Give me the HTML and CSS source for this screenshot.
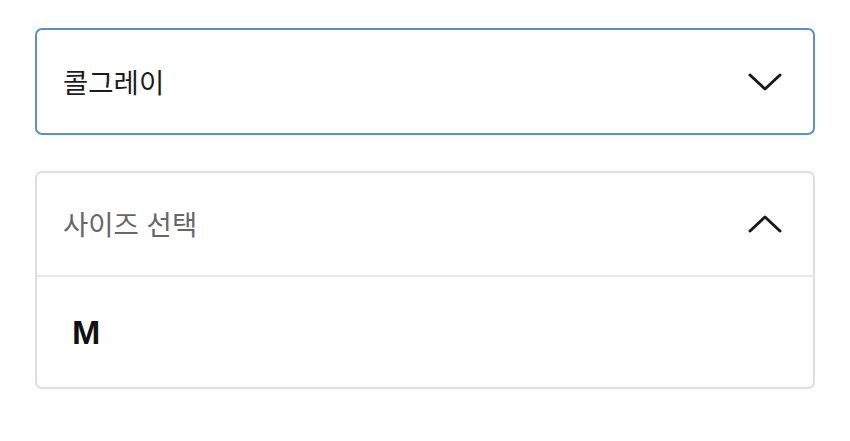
FILE: index.html
```html
<!DOCTYPE html>
<html lang="ko">
<head>
<meta charset="utf-8">
<title>옵션 선택</title>
<link rel="stylesheet" href="styles.css">
</head>
<body>
<div class="options">
  <div class="select select--active">
    <span class="select__value">콜그레이</span>
    <svg class="chevron" width="34" height="18" viewBox="0 0 34 18"><path d="M2 2 L17 16 L32 2" fill="none" stroke="#1a1a1a" stroke-width="3" stroke-linecap="round" stroke-linejoin="round"/></svg>
  </div>
  <div class="select select--open">
    <div class="select__head">
      <span class="select__placeholder">사이즈 선택</span>
      <svg class="chevron" width="34" height="18" viewBox="0 0 34 18"><path d="M2 16 L17 2 L32 16" fill="none" stroke="#1a1a1a" stroke-width="3" stroke-linecap="round" stroke-linejoin="round"/></svg>
    </div>
    <ul class="select__list">
      <li class="select__item">M</li>
    </ul>
  </div>
</div>
</body>
</html>
```
FILE: styles.css
```css
html, body {
  margin: 0;
  padding: 0;
  background: #fff;
}

body {
  font-family: "Noto Sans CJK KR", "Noto Sans", sans-serif;
  color: #1a1a1a;
}

.options {
  display: flex;
  flex-direction: column;
  gap: 36px;
  padding: 28px 35px 0 35px;
  width: 780px;
}

.select {
  border: 2px solid #dedede;
  border-radius: 7px;
  box-sizing: border-box;
}

.select--active {
  border-color: #5b8ecc;
  height: 107px;
  display: flex;
  align-items: center;
  justify-content: space-between;
  padding: 0 31px 0 26px;
}

.select__value {
  font-size: 27.5px;
  color: #1c1c1c;
  line-height: 1;
}

.select__head {
  height: 104px;
  display: flex;
  align-items: center;
  justify-content: space-between;
  padding: 0 31px 0 26px;
  border-bottom: 2px solid #e6e6e6;
  box-sizing: border-box;
}

.select__placeholder {
  font-size: 27.5px;
  color: #666;
  line-height: 1;
}

.chevron {
  display: block;
}

.select__list {
  list-style: none;
  margin: 0;
  padding: 0;
}

.select__item {
  height: 110px;
  display: flex;
  align-items: center;
  padding-left: 35px;
  font-family: "Liberation Sans", Arial, sans-serif;
  font-weight: bold;
  font-size: 34px;
  color: #111;
}
```
